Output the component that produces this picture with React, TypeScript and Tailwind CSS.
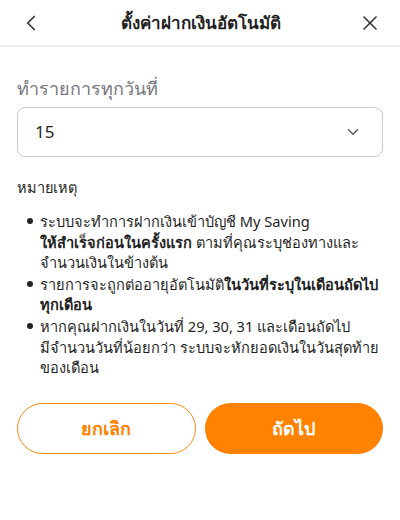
import { ChevronLeft, X, ChevronDown } from "lucide-react";

const notes = [
  [
    <>ระบบจะทำการฝากเงินเข้าบัญชี My Saving</>,
    <>
      <b className="font-bold">ให้สำเร็จก่อนในครั้งแรก</b> ตามที่คุณระบุช่องทางและ
    </>,
    <>จำนวนเงินในข้างต้น</>,
  ],
  [
    <>
      รายการจะถูกต่ออายุอัตโนมัติ<b className="font-bold">ในวันที่ระบุในเดือนถัดไป</b>
    </>,
    <b className="font-bold">ทุกเดือน</b>,
  ],
  [
    <>หากคุณฝากเงินในวันที่ 29, 30, 31 และเดือนถัดไป</>,
    <>มีจำนวนวันที่น้อยกว่า ระบบจะหักยอดเงินในวันสุดท้าย</>,
    <>ของเดือน</>,
  ],
];

export default function App() {
  return (
    <div className="w-[400px] h-[520px] bg-white text-[#1f1f1f] font-['Noto_Sans',sans-serif]">
      <div className="h-[47px] flex items-center justify-between px-[18px] border-b-2 border-[#eeeef2]">
        <ChevronLeft size={26} strokeWidth={1.6} className="text-[#333]" />
        <h1 className="text-[17px] font-bold">ตั้งค่าฝากเงินอัตโนมัติ</h1>
        <X size={24} strokeWidth={1.6} className="text-[#333]" />
      </div>

      <div className="px-[17px] pt-[29px]">
        <label className="block text-[18px] text-[#76767e] leading-[24px]">ทำรายการทุกวันที่</label>
        <div className="mt-[7px] h-[50px] border border-[#c8cbdc] rounded-[8px] flex items-center justify-between pl-[17px] pr-[20px]">
          <span className="text-[17px]">15</span>
          <ChevronDown size={18} strokeWidth={1.8} className="text-[#555]" />
        </div>

        <p className="mt-[20px] text-[14.5px] leading-[20px]">หมายเหตุ</p>
        <ul className="mt-[14px] pl-[8px] flex flex-col gap-[1px]">
          {notes.map((lines, i) => (
            <li key={i} className="flex text-[14.6px] leading-[20.6px]">
              <span className="w-[10px] shrink-0 pt-[7px] pl-[2px]">
                <span className="block w-[6px] h-[6px] rounded-full bg-[#222]" />
              </span>
              <span className="ml-[5px] flex flex-col">
                {lines.map((l, j) => (
                  <span key={j} className="whitespace-nowrap">
                    {l}
                  </span>
                ))}
              </span>
            </li>
          ))}
        </ul>

        <div className="mt-[25px] grid grid-cols-2 gap-[9px]">
          <button className="h-[51px] rounded-full border border-[#ff8a10] text-[#ff8300] text-[18px] font-bold">ยกเลิก</button>
          <button className="h-[51px] rounded-full bg-[#ff8300] text-white text-[18px] font-bold">ถัดไป</button>
        </div>
      </div>
    </div>
  );
}
